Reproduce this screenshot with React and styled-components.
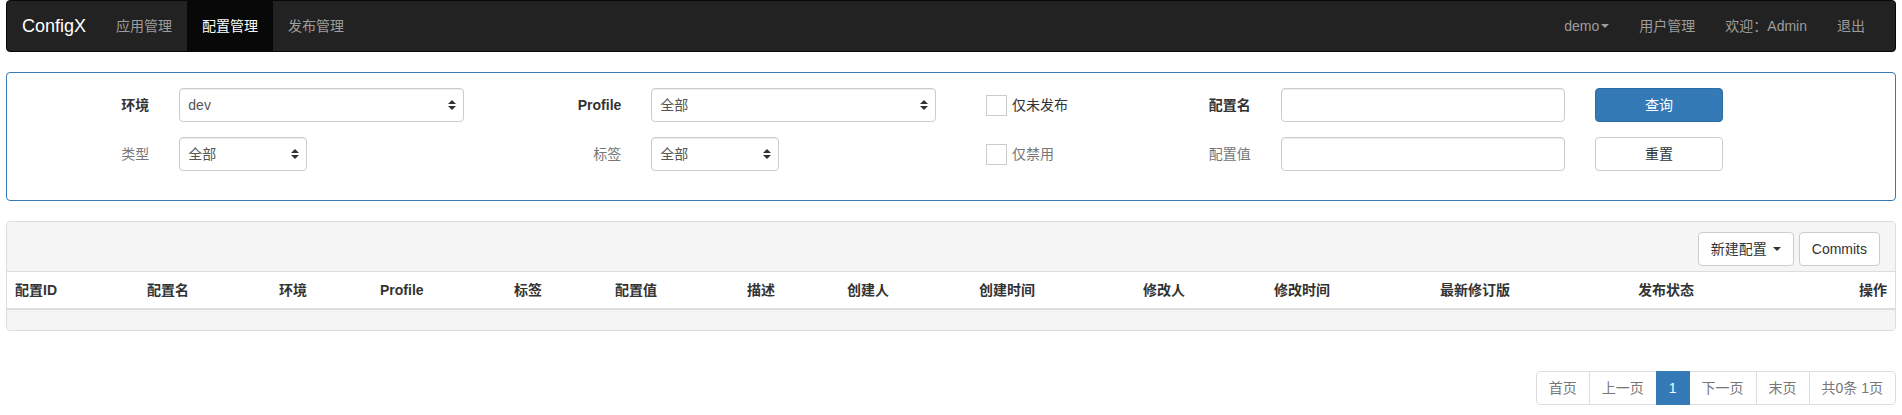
import React from "react";
import styled, { createGlobalStyle } from "styled-components";

const GlobalStyle = createGlobalStyle`
  html, body { margin: 0; padding: 0; background: #fff; }
  body {
    font-family: "Liberation Sans", Arial, "Noto Sans CJK SC", sans-serif;
    font-size: 14px;
    line-height: 1.42857143;
    color: #333;
  }
  * { box-sizing: border-box; }
`;

const Page = styled.div`
  padding: 0 6px;
`;

/* ---------- Navbar ---------- */
const Navbar = styled.nav`
  display: flex;
  align-items: stretch;
  height: 52px;
  background: #222;
  border: 1px solid #080808;
  border-radius: 4px;
  padding: 0 15px 0 0;
`;

const Brand = styled.a`
  display: block;
  padding: 15px;
  height: 50px;
  font-size: 18px;
  line-height: 20px;
  color: #fff;
  text-decoration: none;
`;

const NavList = styled.ul`
  display: flex;
  list-style: none;
  margin: 0;
  padding: 0;
  margin-left: ${(p) => (p.$right ? "auto" : "0")};
`;

const NavLink = styled.a`
  display: flex;
  align-items: center;
  height: 50px;
  padding: 15px;
  line-height: 20px;
  color: ${(p) => (p.$active ? "#fff" : "#9d9d9d")};
  background: ${(p) => (p.$active ? "#080808" : "transparent")};
  text-decoration: none;
  white-space: nowrap;
`;

const Caret = styled.span`
  display: inline-block;
  width: 0;
  height: 0;
  margin-left: 2px;
  border-top: 4px solid ${(p) => p.$color || "currentColor"};
  border-left: 4px solid transparent;
  border-right: 4px solid transparent;
  vertical-align: middle;
`;

/* ---------- Panels ---------- */
const Panel = styled.section`
  margin-top: 20px;
  background: #fff;
  border: 1px solid ${(p) => (p.$primary ? "#337ab7" : "#ddd")};
  border-radius: 4px;
  overflow: hidden;
`;

const SearchGrid = styled.div`
  display: grid;
  grid-template-columns: repeat(12, 1fr);
  row-gap: 15px;
  padding: 15px 0 29px;
`;

const Cell = styled.div`
  grid-column: ${(p) => p.$col} / span ${(p) => p.$span || 1};
  grid-row: ${(p) => p.$row};
  padding: 0 15px;
  height: 34px;
  display: flex;
  align-items: center;
  justify-content: ${(p) => (p.$right ? "flex-end" : "flex-start")};
`;

const FieldLabel = styled.label`
  font-weight: ${(p) => (p.$strong ? 700 : 400)};
  color: ${(p) => (p.$strong ? "#333" : "#777")};
  white-space: nowrap;
`;

const SelectWrap = styled.div`
  position: relative;
  width: 100%;
  height: 34px;
`;

const Select = styled.select`
  appearance: none;
  -webkit-appearance: none;
  width: 100%;
  height: 34px;
  padding: 6px 24px 6px 8px;
  font: inherit;
  color: #555;
  background: #fff;
  border: 1px solid #ccc;
  border-radius: 4px;
  box-shadow: inset 0 1px 1px rgba(0, 0, 0, 0.075);
  outline: none;
`;

const SelectArrows = styled.svg`
  position: absolute;
  right: 8px;
  top: 12px;
  width: 8px;
  height: 10px;
  pointer-events: none;
`;

const TextInput = styled.input`
  width: 100%;
  height: 34px;
  padding: 6px 12px;
  font: inherit;
  color: #555;
  background: #fff;
  border: 1px solid #ccc;
  border-radius: 4px;
  box-shadow: inset 0 1px 1px rgba(0, 0, 0, 0.075);
  outline: none;
`;

const CheckLabel = styled.label`
  display: flex;
  align-items: center;
  gap: 5px;
  padding-left: 20px;
  color: ${(p) => (p.$muted ? "#777" : "#333")};
  white-space: nowrap;
`;

const CheckBox = styled.span`
  display: inline-block;
  width: 21px;
  height: 21px;
  border: 1px solid #ccc;
  background: #fff;
`;

const Button = styled.button`
  display: inline-flex;
  align-items: center;
  justify-content: center;
  gap: 4px;
  height: 34px;
  width: ${(p) => (p.$block ? "100%" : "auto")};
  padding: 6px 12px;
  font: inherit;
  line-height: 20px;
  border-radius: 4px;
  border: 1px solid ${(p) => (p.$primary ? "#2e6da4" : "#ccc")};
  background: ${(p) => (p.$primary ? "#337ab7" : "#fff")};
  color: ${(p) => (p.$primary ? "#fff" : "#333")};
  white-space: nowrap;
  cursor: pointer;
`;

const PanelHeading = styled.div`
  display: flex;
  justify-content: flex-end;
  gap: 5px;
  padding: 10px 15px 5px;
  background: #f5f5f5;
  border-bottom: 1px solid #ddd;
`;

const Table = styled.table`
  width: 100%;
  border-collapse: collapse;
  table-layout: fixed;
`;

const Th = styled.th`
  padding: 8px;
  text-align: left;
  font-weight: 700;
  line-height: 20px;
  color: #333;
  border-bottom: 2px solid #ddd;
  white-space: nowrap;
`;

const PanelFooter = styled.div`
  height: 20px;
  background: #f5f5f5;
`;

/* ---------- Pagination ---------- */
const PagerRow = styled.div`
  display: flex;
  justify-content: flex-end;
  margin: 40px 0 20px;
`;

const Pager = styled.ul`
  display: flex;
  list-style: none;
  margin: 0;
  padding: 0;
`;

const PageItem = styled.li`
  padding: 6px 12px;
  line-height: 20px;
  height: 34px;
  margin-left: -1px;
  border: 1px solid ${(p) => (p.$active ? "#337ab7" : "#ddd")};
  background: ${(p) => (p.$active ? "#337ab7" : "#fff")};
  color: ${(p) => (p.$active ? "#fff" : "#777")};
  position: relative;
  z-index: ${(p) => (p.$active ? 2 : 1)};
  white-space: nowrap;
  &:first-child {
    margin-left: 0;
    border-radius: 4px 0 0 4px;
  }
  &:last-child {
    border-radius: 0 4px 4px 0;
  }
`;

const Arrows = () => (
  <SelectArrows viewBox="0 0 8 10">
    <path d="M4 0 L8 4 L0 4 Z" fill="#333" />
    <path d="M0 6 L8 6 L4 10 Z" fill="#333" />
  </SelectArrows>
);

const SelectField = ({ value }) => (
  <SelectWrap>
    <Select defaultValue={value}>
      <option value={value}>{value}</option>
    </Select>
    <Arrows />
  </SelectWrap>
);

const columns = [
  ["配置ID", 132],
  ["配置名", 132],
  ["环境", 101],
  ["Profile", 134],
  ["标签", 101],
  ["配置值", 132],
  ["描述", 100],
  ["创建人", 132],
  ["创建时间", 164],
  ["修改人", 131],
  ["修改时间", 166],
  ["最新修订版", 198],
  ["发布状态", 221],
  ["操作", null],
];

export default function App() {
  return (
    <Page>
      <GlobalStyle />
      <Navbar>
        <Brand href="#">ConfigX</Brand>
        <NavList>
          <li><NavLink href="#">应用管理</NavLink></li>
          <li><NavLink href="#" $active>配置管理</NavLink></li>
          <li><NavLink href="#">发布管理</NavLink></li>
        </NavList>
        <NavList $right>
          <li><NavLink href="#">demo<Caret /></NavLink></li>
          <li><NavLink href="#">用户管理</NavLink></li>
          <li><NavLink href="#">欢迎：Admin</NavLink></li>
          <li><NavLink href="#">退出</NavLink></li>
        </NavList>
      </Navbar>

      <Panel $primary>
        <SearchGrid>
          <Cell $row={1} $col={1} $right><FieldLabel $strong>环境</FieldLabel></Cell>
          <Cell $row={1} $col={2} $span={2}><SelectField value="dev" /></Cell>
          <Cell $row={1} $col={4} $right><FieldLabel $strong>Profile</FieldLabel></Cell>
          <Cell $row={1} $col={5} $span={2}><SelectField value="全部" /></Cell>
          <Cell $row={1} $col={7}><CheckLabel><CheckBox />仅未发布</CheckLabel></Cell>
          <Cell $row={1} $col={8} $right><FieldLabel $strong>配置名</FieldLabel></Cell>
          <Cell $row={1} $col={9} $span={2}><TextInput /></Cell>
          <Cell $row={1} $col={11}><Button $primary $block>查询</Button></Cell>

          <Cell $row={2} $col={1} $right><FieldLabel>类型</FieldLabel></Cell>
          <Cell $row={2} $col={2}><SelectField value="全部" /></Cell>
          <Cell $row={2} $col={4} $right><FieldLabel>标签</FieldLabel></Cell>
          <Cell $row={2} $col={5}><SelectField value="全部" /></Cell>
          <Cell $row={2} $col={7}><CheckLabel $muted><CheckBox />仅禁用</CheckLabel></Cell>
          <Cell $row={2} $col={8} $right><FieldLabel>配置值</FieldLabel></Cell>
          <Cell $row={2} $col={9} $span={2}><TextInput /></Cell>
          <Cell $row={2} $col={11}><Button $block>重置</Button></Cell>
        </SearchGrid>
      </Panel>

      <Panel>
        <PanelHeading>
          <Button>新建配置<Caret $color="#333" /></Button>
          <Button>Commits</Button>
        </PanelHeading>
        <Table>
          <colgroup>
            {columns.map(([name, w]) => (
              <col key={name} style={w ? { width: `${w}px` } : undefined} />
            ))}
          </colgroup>
          <thead>
            <tr>
              {columns.map(([name]) => (
                <Th key={name}>{name}</Th>
              ))}
            </tr>
          </thead>
        </Table>
        <PanelFooter />
      </Panel>

      <PagerRow>
        <Pager>
          <PageItem>首页</PageItem>
          <PageItem>上一页</PageItem>
          <PageItem $active>1</PageItem>
          <PageItem>下一页</PageItem>
          <PageItem>末页</PageItem>
          <PageItem>共0条 1页</PageItem>
        </Pager>
      </PagerRow>
    </Page>
  );
}
